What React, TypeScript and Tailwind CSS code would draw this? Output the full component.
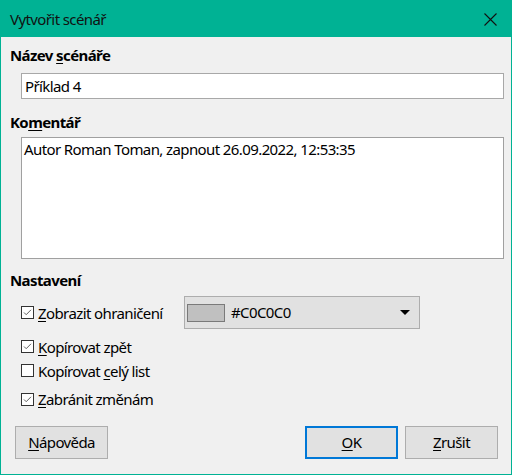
import React from "react";

const font = { fontFamily: '"Noto Sans", "Open Sans", sans-serif' };

function Check({ checked }: { checked: boolean }) {
  return (
    <svg width="13" height="13" viewBox="0 0 13 13" className="shrink-0">
      <rect x="0.5" y="0.5" width="12" height="12" fill="#ffffff" stroke="#333333" />
      {checked && (
        <path d="M3 6.5 L5.2 8.7 L10 3.8" fill="none" stroke="#606060" strokeWidth="1" />
      )}
    </svg>
  );
}

function CheckRow({ checked, children, className }: { checked: boolean; children: React.ReactNode; className?: string }) {
  return (
    <div className={"flex items-center gap-[4px] " + (className ?? "")}>
      <Check checked={checked} />
      <span className="text-[15px] leading-[20px] text-black">{children}</span>
    </div>
  );
}

export default function App() {
  return (
    <div
      className="w-[512px] h-[475px] border border-[#00b294] bg-[#f0f0f0] flex flex-col text-black tracking-[-0.6px]"
      style={font}
    >
      <div className="h-[36px] bg-[#00b294] flex items-center justify-between pl-[9px] pr-[14px] shrink-0">
        <span className="text-[15px] text-[#111]">Vytvořit scénář</span>
        <svg width="13" height="13" viewBox="0 0 13 13">
          <path d="M0.5 0.5 L12.5 12.5 M12.5 0.5 L0.5 12.5" stroke="#111" strokeWidth="1.1" />
        </svg>
      </div>
      <div className="flex flex-col pl-[9px] pr-[7px] flex-1">
        <div className="mt-[8px] text-[15px] leading-[20px] font-bold">
          Název <u className="underline-offset-2">s</u>cénáře
        </div>
        <div className="ml-[11px] mt-[8px] h-[26px] bg-white border border-[#a8a8a8] flex items-center pl-[3px] text-[15px]">
          Příklad 4
        </div>
        <div className="mt-[13px] text-[15px] leading-[20px] font-bold">
          Ko<u className="underline-offset-2">m</u>entář
        </div>
        <div className="ml-[11px] mt-[5px] h-[122px] bg-white border border-[#a0a0a0] pl-[2px] pt-[1px] text-[15px] leading-[20px]">
          Autor Roman Toman, zapnout 26.09.2022, 12:53:35
        </div>
        <div className="mt-[11px] text-[15px] leading-[20px] font-bold">Nastavení</div>
        <div className="flex items-center mt-[6px] h-[33px]">
          <CheckRow checked className="ml-[11px] w-[163px]">
            <u className="underline-offset-2">Z</u>obrazit ohraničení
          </CheckRow>
          <div className="w-[236px] h-[33px] bg-[#e1e1e1] border border-[#adadad] flex items-center pl-[2px] pr-[9px]">
            <div className="w-[38px] h-[18px] bg-[#c0c0c0] border border-[#7a7a7a]" />
            <span className="ml-[6px] text-[15px] flex-1">#C0C0C0</span>
            <svg width="10" height="5" viewBox="0 0 10 5">
              <path d="M0 0 L10 0 L5 5 Z" fill="#000" />
            </svg>
          </div>
        </div>
        <CheckRow checked className="ml-[11px] mt-[5px] h-[25px]">
          <u className="underline-offset-2">K</u>opírovat zpět
        </CheckRow>
        <CheckRow checked={false} className="ml-[11px] mt-[0px] h-[23px]">
          Kopírovat <u className="underline-offset-2">c</u>elý list
        </CheckRow>
        <CheckRow checked className="ml-[11px] mt-[4px] h-[26px]">
          <u className="underline-offset-2">Z</u>abránit změnám
        </CheckRow>
        <div className="mt-[14px] flex items-center">
          <button className="ml-[5px] w-[93px] h-[33px] bg-[#e1e1e1] border border-[#adadad] text-[15px]">
            <u className="underline-offset-2">N</u>ápověda
          </button>
          <div className="flex-1" />
          <button className="w-[93px] h-[33px] bg-[#e1e1e1] border-2 border-[#0078d7] text-[15px]">
            <u className="underline-offset-2">O</u>K
          </button>
          <button className="ml-[7px] mr-[6px] w-[93px] h-[33px] bg-[#e1e1e1] border border-[#adadad] text-[15px]">
            <u className="underline-offset-2">Z</u>rušit
          </button>
        </div>
      </div>
    </div>
  );
}
